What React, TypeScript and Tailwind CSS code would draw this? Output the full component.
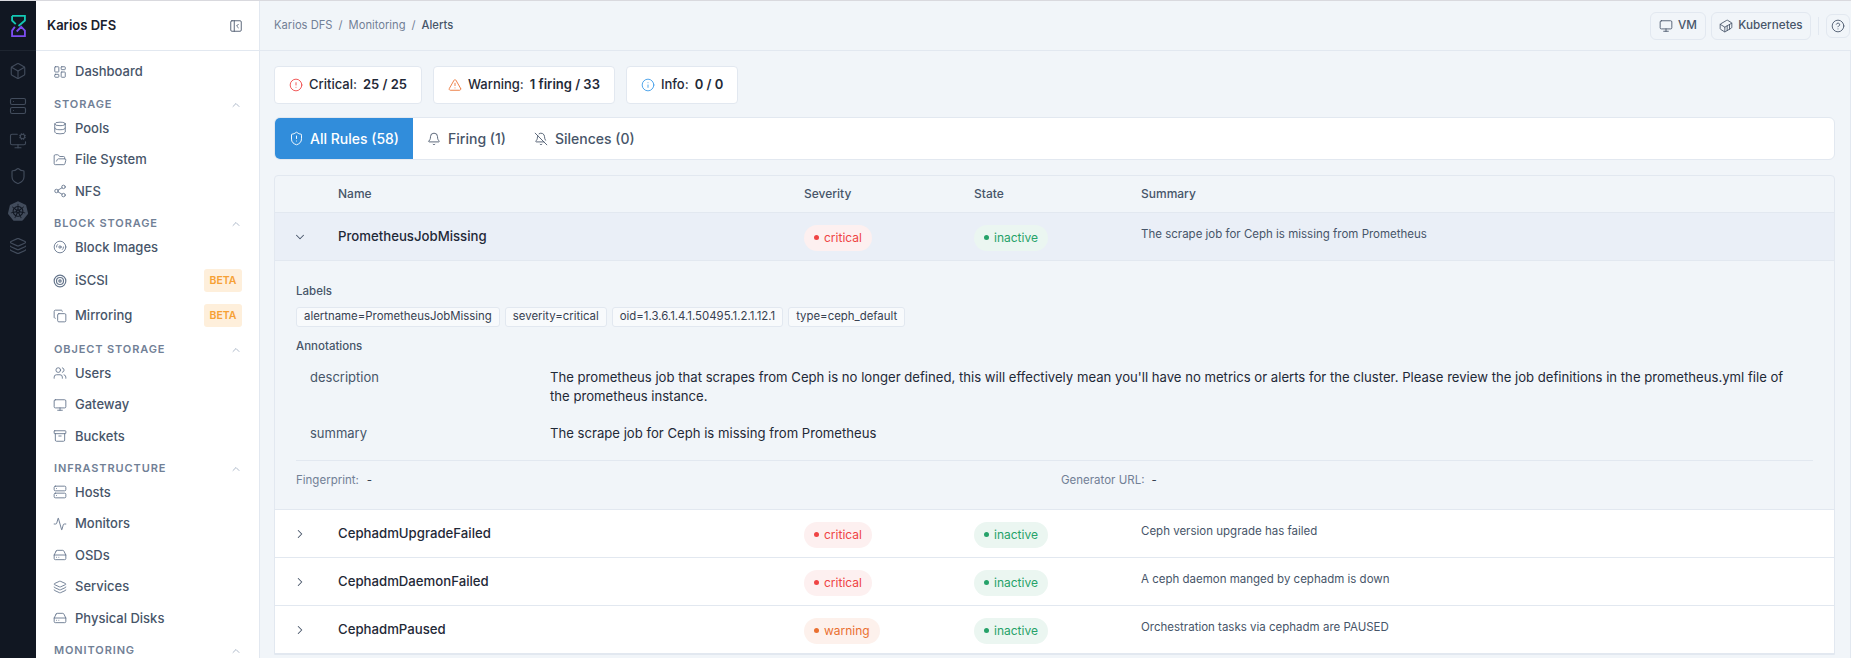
import React from "react";
import {
  Activity,
  Archive,
  Bell,
  BellOff,
  Box,
  ChevronDown,
  ChevronRight,
  ChevronUp,
  CircleAlert,
  CircleHelp,
  Container,
  Copy,
  Database,
  FolderOpen,
  HardDrive,
  Info,
  Layers,
  LayoutDashboard,
  Monitor,
  MonitorCog,
  PanelLeftClose,
  Server,
  Share2,
  Shield,
  ShieldAlert,
  Target,
  TriangleAlert,
  Users,
  Disc3,
} from "lucide-react";
import { SiKubernetes } from "react-icons/si";

const font = { fontFamily: "Inter, 'Noto Sans', sans-serif" };

const sections = [
  {
    title: "Storage",
    items: [
      { name: "Pools", icon: Database },
      { name: "File System", icon: FolderOpen },
      { name: "NFS", icon: Share2 },
    ],
  },
  {
    title: "Block Storage",
    items: [
      { name: "Block Images", icon: Disc3 },
      { name: "iSCSI", icon: Target, beta: true },
      { name: "Mirroring", icon: Copy, beta: true },
    ],
  },
  {
    title: "Object Storage",
    items: [
      { name: "Users", icon: Users },
      { name: "Gateway", icon: Monitor },
      { name: "Buckets", icon: Archive },
    ],
  },
  {
    title: "Infrastructure",
    items: [
      { name: "Hosts", icon: Server },
      { name: "Monitors", icon: Activity },
      { name: "OSDs", icon: HardDrive },
      { name: "Services", icon: Layers },
      { name: "Physical Disks", icon: HardDrive },
    ],
  },
  { title: "Monitoring", items: [] },
];

const rules = [
  { name: "CephadmUpgradeFailed", severity: "critical", summary: "Ceph version upgrade has failed" },
  { name: "CephadmDaemonFailed", severity: "critical", summary: "A ceph daemon manged by cephadm is down" },
  { name: "CephadmPaused", severity: "warning", summary: "Orchestration tasks via cephadm are PAUSED" },
];

const labels = [
  "alertname=PrometheusJobMissing",
  "severity=critical",
  "oid=1.3.6.1.4.1.50495.1.2.1.12.1",
  "type=ceph_default",
];

const rowGrid = "grid grid-cols-[63px_466px_170px_167px_1fr]";

const Logo = () => (
  <svg width="15" height="22" viewBox="0 0 16 24" fill="none">
    <path d="M1 1H15V6L8 12" stroke="#14c8b4" strokeWidth="2" />
    <path d="M1 1V6L5 10" stroke="#14c8b4" strokeWidth="2" />
    <path d="M4 13L1 17V23H15V17L11 13L6 18" stroke="#7c4df0" strokeWidth="2" />
  </svg>
);

const Rail = () => (
  <div className="w-9 shrink-0 bg-[#111722] flex flex-col items-center">
    <div className="h-[50px] w-full flex items-center justify-center border-b border-[#1e2530]">
      <Logo />
    </div>
    <div className="flex flex-col items-center gap-[17px] pt-[11px] text-[#424c5c]">
      <Box size={18} strokeWidth={1.5} />
      <Server size={18} strokeWidth={1.5} />
      <MonitorCog size={18} strokeWidth={1.5} />
      <Shield size={18} strokeWidth={1.5} />
      <SiKubernetes size={20} className="-my-px" />
      <Layers size={18} strokeWidth={1.5} />
    </div>
  </div>
);

const Sidebar = () => (
  <div className="w-[224px] shrink-0 bg-white border-r border-[#e2e8f0] flex flex-col">
    <div className="h-[50px] shrink-0 border-b border-[#e2e8f0] pl-[11px] pr-[16px] flex items-center justify-between">
      <span className="text-[13px] font-semibold text-[#1a202c]">Karios DFS</span>
      <PanelLeftClose size={14} strokeWidth={1.5} className="text-[#475569]" />
    </div>
    <div className="pt-[5px] pl-[17px] pr-[17px]">
      <div className="h-[32px] flex items-center gap-[8px] text-[13px] font-medium text-[#475569]">
        <LayoutDashboard size={14} strokeWidth={1.5} className="text-[#64748b]" />
        Dashboard
      </div>
      {sections.map((section) => (
        <div key={section.title} className="mt-[8.5px]">
          <div className="h-4 pl-px flex items-center justify-between">
            <span className="text-[11px] font-semibold uppercase tracking-[0.08em] text-[#718096]">
              {section.title}
            </span>
            <ChevronUp size={12} strokeWidth={1.5} className="text-[#94a3b8]" />
          </div>
          {section.items.map((item) => {
            const Icon = item.icon;
            return (
              <div
                key={item.name}
                className={`${item.beta ? "h-[35px]" : "h-[31.5px]"} flex items-center gap-[8px] text-[13px] font-medium text-[#475569]`}
              >
                <Icon size={14} strokeWidth={item.name === "iSCSI" ? 2 : 1.5} className="text-[#64748b]" />
                <span className="flex-1">{item.name}</span>
                {item.beta && (
                  <span className="w-[38px] h-[23px] rounded-[3px] bg-[#feefdb] text-[#f6a034] text-[10.5px] font-semibold flex items-center justify-center">
                    BETA
                  </span>
                )}
              </div>
            );
          })}
        </div>
      ))}
    </div>
  </div>
);

const Header = () => (
  <div className="h-[50px] shrink-0 border-b border-[#e2e8f0] pl-[14px] pr-[1px] flex items-center justify-between">
    <div className="flex items-center text-[11.2px] text-[#718096] gap-[6px]">
      <span>Karios DFS</span>
      <span>/</span>
      <span>Monitoring</span>
      <span>/</span>
      <span className="font-medium text-[#475569]">Alerts</span>
    </div>
    <div className="flex items-center">
      <div className="h-[28px] w-[56px] rounded-md border border-[#e2e8f0] flex items-center justify-center gap-[5px] text-[11.7px] font-medium text-[#475569]">
        <Monitor size={14} strokeWidth={1.5} />
        VM
      </div>
      <div className="h-[28px] w-[100px] ml-[5px] rounded-md border border-[#e2e8f0] flex items-center justify-center gap-[5px] text-[11.7px] font-medium text-[#475569]">
        <Container size={14} strokeWidth={1.5} />
        Kubernetes
      </div>
      <div className="w-px h-[18px] bg-[#e2e8f0] ml-[7px] mr-[7px]" />
      <div className="h-[24px] w-[24px] rounded-md border border-[#e2e8f0] flex items-center justify-center text-[#475569]">
        <CircleHelp size={14} strokeWidth={1.5} />
      </div>
    </div>
  </div>
);

const StatCard = ({ icon, label, value }: { icon: React.ReactNode; label: string; value: string }) => (
  <div className="h-[38px] pl-[14px] pr-[14px] bg-white border border-[#e2e8f0] rounded-[4px] flex items-center gap-[6px] text-[13px] text-[#1f2937]">
    {icon}
    <span className="font-medium">{label}</span>
    <span className="font-semibold">{value}</span>
  </div>
);

const Pill = ({ kind, text }: { kind: string; text: string }) => {
  const colors: Record<string, { wrap: string; dot: string }> = {
    critical: { wrap: "bg-[#fdf0f0] text-[#ef4444]", dot: "bg-[#ef4444]" },
    warning: { wrap: "bg-[#fdf1ec] text-[#ea7030]", dot: "bg-[#ea7030]" },
    inactive: { wrap: "bg-[#ebf6f1] text-[#26a269]", dot: "bg-[#26a269]" },
  };
  return (
    <span className={`h-[26px] inline-flex items-center gap-[5px] rounded-full px-[10px] text-[12px] ${colors[kind].wrap}`}>
      <span className={`w-[5px] h-[5px] rounded-full ${colors[kind].dot}`} />
      {text}
    </span>
  );
};

export default function App() {
  return (
    <div style={font} className="h-screen flex overflow-hidden bg-[#f1f5f9] border-t border-[#d9d9de]">
      <Rail />
      <Sidebar />
      <div className="flex-1 min-w-0 flex flex-col">
        <Header />
        <div className="flex-1 min-h-0 overflow-hidden pl-[14px] pr-[15px] pt-[15px] border-r border-[#e2e8f0]">
          <div className="flex gap-[11px]">
            <StatCard icon={<CircleAlert size={14} strokeWidth={1.5} className="text-[#ef4444]" />} label="Critical:" value="25 / 25" />
            <StatCard icon={<TriangleAlert size={14} strokeWidth={1.5} className="text-[#ea7030]" />} label="Warning:" value="1 firing / 33" />
            <StatCard icon={<Info size={14} strokeWidth={1.5} className="text-[#3b9ae8]" />} label="Info:" value="0 / 0" />
          </div>

          <div className="mt-[13px] h-[43px] bg-white border border-[#e2e8f0] rounded-[6px] overflow-hidden flex text-[14px] text-[#475569]">
            <div className="w-[138px] bg-[#318ddb] text-white flex items-center justify-center gap-[6px] font-medium">
              <ShieldAlert size={15} strokeWidth={1.5} />
              All Rules (58)
            </div>
            <div className="w-[107px] flex items-center justify-center gap-[7px] font-medium">
              <Bell size={14} strokeWidth={1.5} />
              Firing (1)
            </div>
            <div className="flex items-center gap-[7px] pl-[14px] font-medium">
              <BellOff size={14} strokeWidth={1.5} />
              Silences (0)
            </div>
          </div>

          <div className="mt-[15px] border border-[#e2e8f0] rounded-t-[4px]">
            <div className={`${rowGrid} h-[37px] items-center text-[12px] font-medium text-[#475569] border-b border-[#e2e8f0]`}>
              <div />
              <div>Name</div>
              <div>Severity</div>
              <div>State</div>
              <div>Summary</div>
            </div>

            <div className={`${rowGrid} h-[48px] items-center bg-[#eaeff7] border-b border-[#e2e8f0]`}>
              <div className="pl-[18px] text-[#475569]">
                <ChevronDown size={14} strokeWidth={1.75} />
              </div>
              <div className="text-[13.2px] font-medium text-[#1f2937]">PrometheusJobMissing</div>
              <div><Pill kind="critical" text="critical" /></div>
              <div><Pill kind="inactive" text="inactive" /></div>
              <div className="text-[11.5px] text-[#475569] -mt-[4px]">The scrape job for Ceph is missing from Prometheus</div>
            </div>

            <div className="h-[249px] pl-[21px] pr-[21px] pt-[21px] border-b border-[#e2e8f0]">
              <div className="text-[11.5px] font-medium text-[#475569] leading-[18px]">Labels</div>
              <div className="mt-[7px] flex gap-[5px]">
                {labels.map((label) => (
                  <span key={label} className="h-[20px] px-[7px] flex items-center bg-[#f8fafc] border border-[#e2e8f0] rounded-[3px] text-[11.4px] text-[#374151]">
                    {label}
                  </span>
                ))}
              </div>
              <div className="mt-[10px] text-[11.5px] font-medium text-[#475569] leading-[18px]">Annotations</div>
              <div className="mt-[13px] flex">
                <div className="w-[254px] pl-[14px] text-[13px] text-[#475569] leading-[19px]">description</div>
                <div className="flex-1 pr-[20px] text-[13.13px] text-[#1f2937] leading-[19px]">
                  The prometheus job that scrapes from Ceph is no longer defined, this will effectively mean you'll have no metrics or alerts for the cluster. Please review the job definitions in the prometheus.yml file of the prometheus instance.
                </div>
              </div>
              <div className="mt-[18px] flex">
                <div className="w-[254px] pl-[14px] text-[13px] text-[#475569] leading-[19px]">summary</div>
                <div className="flex-1 text-[13.13px] text-[#1f2937] leading-[19px]">The scrape job for Ceph is missing from Prometheus</div>
              </div>
              <div className="mt-[17px] border-t border-[#e2e8f0] pt-[10px] flex text-[11.5px] leading-[18px]">
                <div className="w-[765px] flex gap-[8px]">
                  <span className="text-[#718096]">Fingerprint:</span>
                  <span className="text-[#374151]">-</span>
                </div>
                <div className="flex gap-[7px]">
                  <span className="text-[#718096]">Generator URL:</span>
                  <span className="text-[#374151]">-</span>
                </div>
              </div>
            </div>

            {rules.map((rule) => (
              <div key={rule.name} className={`${rowGrid} h-[48px] items-center bg-white border-b border-[#e2e8f0]`}>
                <div className="pl-[18px] text-[#475569]">
                  <ChevronRight size={14} strokeWidth={1.75} />
                </div>
                <div className="text-[13.2px] font-medium text-[#1f2937]">{rule.name}</div>
                <div><Pill kind={rule.severity} text={rule.severity} /></div>
                <div><Pill kind="inactive" text="inactive" /></div>
                <div className="text-[11.5px] text-[#475569] -mt-[4px]">{rule.summary}</div>
              </div>
            ))}
          </div>
        </div>
      </div>
    </div>
  );
}
